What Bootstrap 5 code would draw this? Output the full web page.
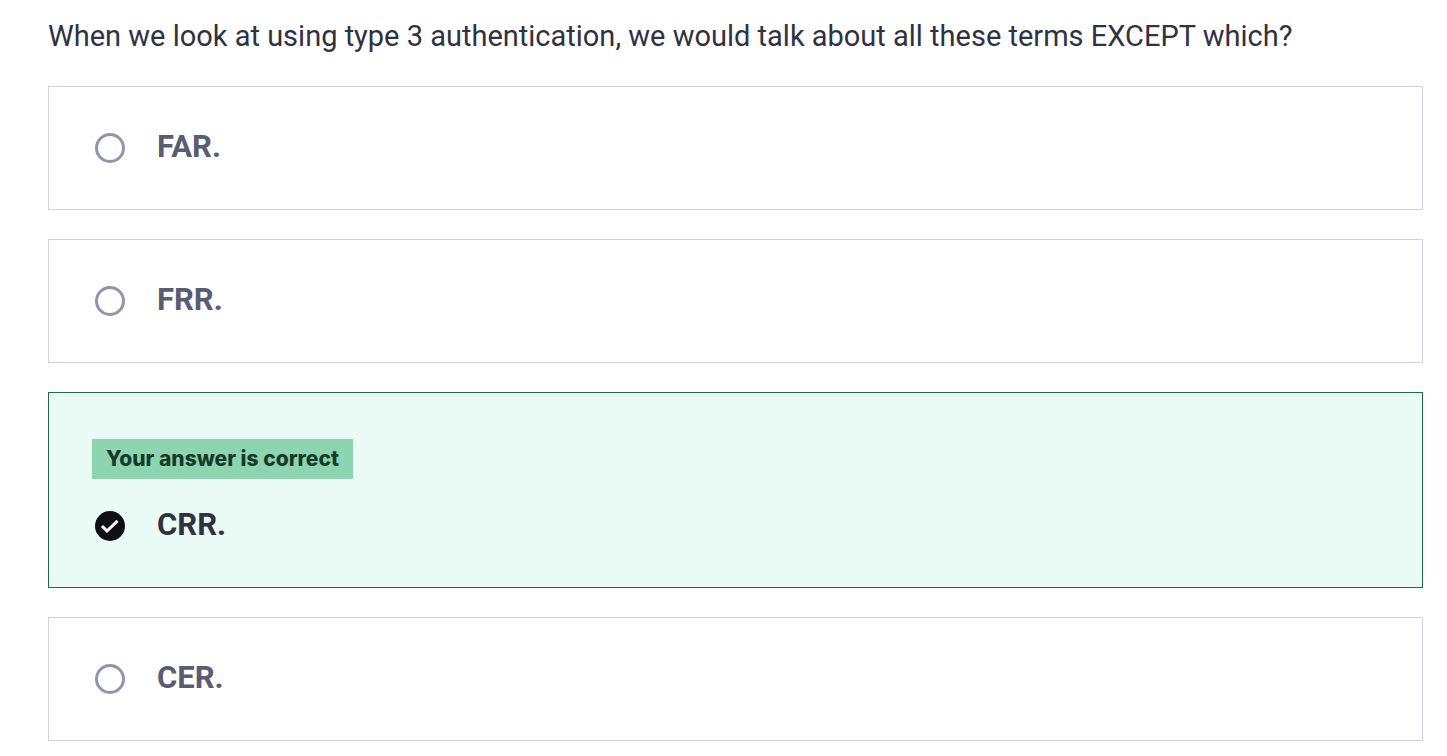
<!DOCTYPE html>
<html lang="en">
<head>
<meta charset="utf-8">
<meta name="viewport" content="width=device-width, initial-scale=1">
<title>Practice question</title>
<link href="https://cdn.jsdelivr.net/npm/bootstrap@5.3.0/dist/css/bootstrap.min.css" rel="stylesheet">
<style>
  body { font-family: Roboto, "Liberation Sans", sans-serif; color: #303141; }
  .quiz { padding: 16px 24px 15px 48px; }
  .question { font-size: 29px; line-height: 40px; margin-bottom: 30px; }
  .answers { gap: 29px; }
  .answer { padding: 46px 43px; border: 1px solid #d1d2e0; color: #595c73; cursor: pointer; }
  .answer.correct { background: #eafaf5; border-color: #1e6b47; color: #303141; }
  .answer-row { gap: 32px; padding-left: 3px; }
  .answer-text { font-size: 31px; line-height: 28px; font-weight: 700; }
  .verdict { background: #8cd5b0; color: #153b2a; font-family: Inter, Roboto, sans-serif; font-size: 21px; line-height: 40px; font-weight: 800; padding: 0 14px; margin-bottom: 32px; }
  .answer .form-check-input { width: 30px; height: 30px; margin: 0; border: 3px solid #9194ac; background-color: transparent; }
  .answer .form-check-input:checked {
    border: 0; background-color: #101014; background-size: 30px 30px;
    background-image: url("data:image/svg+xml,%3csvg xmlns='http://www.w3.org/2000/svg' viewBox='0 0 30 30'%3e%3cpath d='M7 15l5 5L22.500 9.800' fill='none' stroke='%23fff' stroke-width='3'/%3e%3c/svg%3e");
  }
</style>
</head>
<body>
<main class="container-fluid quiz">
  <h1 class="question fw-normal" id="question">When we look at using type 3 authentication, we would talk about all these terms EXCEPT which?</h1>
  <form class="answers d-flex flex-column" role="radiogroup" aria-labelledby="question">
    <label class="answer d-block" for="far">
      <span class="answer-row d-flex align-items-start">
        <input class="form-check-input flex-shrink-0" type="radio" name="answer" id="far">
        <span class="answer-text">FAR.</span>
      </span>
    </label>
    <label class="answer d-block" for="frr">
      <span class="answer-row d-flex align-items-start">
        <input class="form-check-input flex-shrink-0" type="radio" name="answer" id="frr">
        <span class="answer-text">FRR.</span>
      </span>
    </label>
    <label class="answer correct d-flex flex-column align-items-start" for="crr">
      <span class="verdict">Your answer is correct</span>
      <span class="answer-row d-flex align-items-start">
        <input class="form-check-input flex-shrink-0" type="radio" name="answer" id="crr" checked>
        <span class="answer-text">CRR.</span>
      </span>
    </label>
    <label class="answer d-block" for="cer">
      <span class="answer-row d-flex align-items-start">
        <input class="form-check-input flex-shrink-0" type="radio" name="answer" id="cer">
        <span class="answer-text">CER.</span>
      </span>
    </label>
  </form>
</main>
<script src="https://cdn.jsdelivr.net/npm/bootstrap@5.3.0/dist/js/bootstrap.bundle.min.js"></script>
</body>
</html>
